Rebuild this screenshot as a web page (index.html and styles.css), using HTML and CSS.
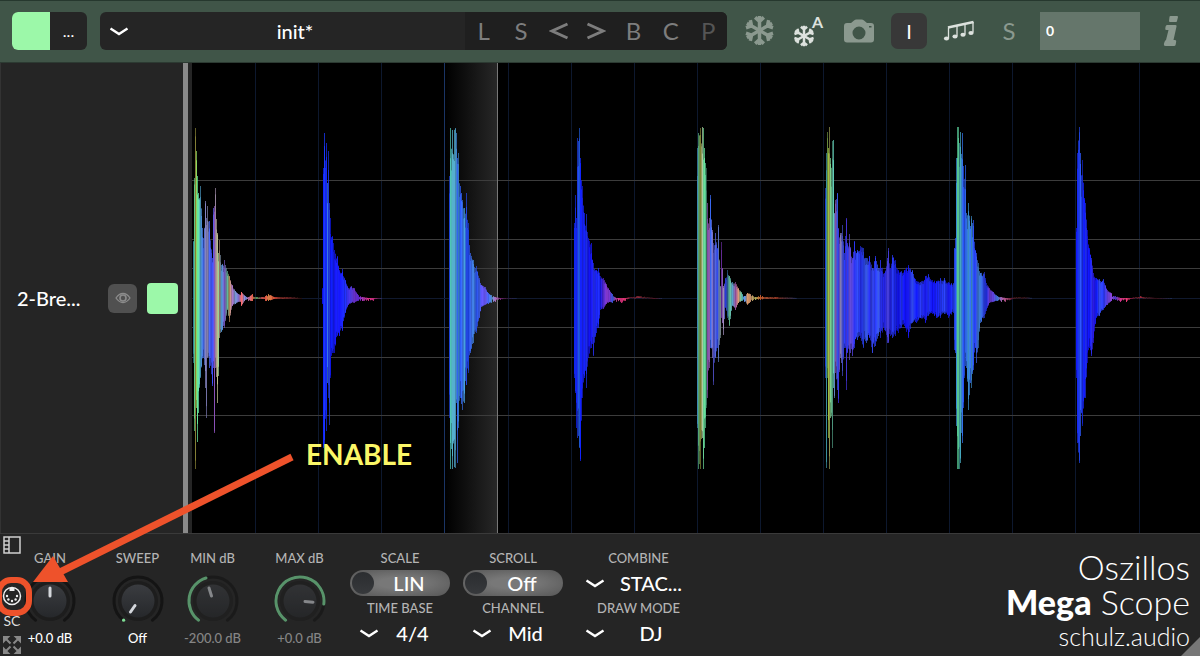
FILE: index.html
```html
<!DOCTYPE html>
<html lang="en">

<head>
  <meta charset="utf-8">
  <title>Oszillos Mega Scope</title>
  <link rel="stylesheet" href="styles.css">
</head>

<body>
  <!-- shared shapes -->
  <svg class="defs" width="0" height="0" aria-hidden="true">
    <defs>
      <linearGradient id="knobFill" x1="0" y1="0" x2="0" y2="1">
        <stop offset="0" stop-color="#3a3c40" />
        <stop offset="1" stop-color="#26282b" />
      </linearGradient>
      <linearGradient id="scanFill" x1="0" y1="0" x2="1" y2="0">
        <stop offset="0" stop-color="#000" />
        <stop offset="1" stop-color="#282828" />
      </linearGradient>
      <g id="arm">
        <path d="M0 0V-15M-4.500 -13.500L0 -9.500L4.500 -13.500" />
      </g>
      <symbol id="flake" viewBox="-16 -16 32 32">
        <g fill="none" stroke="currentColor" stroke-width="3.600">
          <use href="#arm" />
          <use href="#arm" transform="rotate(60)" />
          <use href="#arm" transform="rotate(120)" />
          <use href="#arm" transform="rotate(180)" />
          <use href="#arm" transform="rotate(240)" />
          <use href="#arm" transform="rotate(300)" />
        </g>
      </symbol>
      <symbol id="chevron" viewBox="0 0 20 10">
        <path d="M1.500 1.500L10 7L18.500 1.500" fill="none" stroke="#fff" stroke-width="2.400" />
      </symbol>
      <symbol id="track" viewBox="-27 -27 54 54">
        <circle r="20" fill="#1d1d1d" />
        <path d="M-14.400 19.200A24 24 0 1 1 14.400 19.200" fill="none" stroke="#141414" stroke-width="3" stroke-linecap="round" />
        <circle r="16.500" fill="url(#knobFill)" />
      </symbol>
    </defs>
  </svg>

  <header class="topbar">
    <div class="color-box">
      <button class="swatch" aria-label="Color"></button>
      <button class="more">...</button>
    </div>

    <div class="preset">
      <div class="picker preset-picker">
        <svg class="chevron"><use href="#chevron" /></svg>
        <select aria-label="Preset">
          <option>init*</option>
        </select>
      </div>
      <div class="preset-buttons">
        <button>L</button>
        <button>S</button>
        <button aria-label="Previous"><svg width="20" height="18" viewBox="0 0 20 18"><path d="M18.500 2L3 9L18.500 16" /></svg></button>
        <button aria-label="Next"><svg width="20" height="18" viewBox="0 0 20 18"><path d="M1.500 2L17 9L1.500 16" /></svg></button>
        <button>B</button>
        <button>C</button>
        <button class="off">P</button>
      </div>
    </div>

    <div class="tools">
      <button aria-label="Freeze"><svg width="31" height="31"><use href="#flake" /></svg></button>
      <button class="lit" aria-label="Auto freeze">
        <svg width="40" height="36" viewBox="0 0 40 36">
          <use href="#flake" x="4" y="12" width="22" height="22" />
          <text x="23" y="15" font-size="16" font-weight="700" fill="currentColor">A</text>
        </svg>
      </button>
      <button aria-label="Snapshot">
        <svg width="30" height="24" viewBox="0 0 30 24">
          <path fill="currentColor" fill-rule="evenodd" d="M3 4H7L10 1.500Q11 .500 12.500 .500H17.500Q19 .500 20 1.500L23 4H27Q30 4 30 7V20.500Q30 23.500 27 23.500H3Q0 23.500 0 20.500V7Q0 4 3 4ZM15 7.500A6.500 6.500 0 1 0 15 20.500A6.500 6.500 0 1 0 15 7.500ZM25 7V8.500H27.500V7Z" />
        </svg>
      </button>
      <button class="input-mode">I</button>
      <button class="lit" aria-label="Notes">
        <svg width="32" height="22" viewBox="0 0 32 22">
          <g fill="none" stroke="currentColor" stroke-width="1.300">
            <path d="M5.500 18V7.500M14 16V6M22 14.500V4M30 12.500V2" />
            <path d="M5 7.500L30.500 2" stroke-width="2.800" />
          </g>
          <g fill="currentColor">
            <ellipse cx="3.500" cy="18.500" rx="2.600" ry="2" />
            <ellipse cx="12" cy="16.500" rx="2.600" ry="2" />
            <ellipse cx="20" cy="14.800" rx="2.600" ry="2" />
            <ellipse cx="28" cy="13" rx="2.600" ry="2" />
          </g>
        </svg>
      </button>
      <button>S</button>
    </div>

    <input class="number" type="text" value="0" aria-label="Value">

    <button class="info" aria-label="Info">
      <svg width="16" height="32" viewBox="0 0 16 32">
        <path fill="currentColor" d="M7.500 1H14Q15 1 15 2L14 6Q14 7 13 7H7Q6 7 6 6L6.500 2Q6.500 1 7.500 1ZM4 10H12.500Q14 10 13.500 11.500L10.500 25H12Q13.500 25 13.200 26.500L12.700 29.500Q12.400 31 11 31H2.500Q.500 31 1 28.500L1.500 27Q2 25.500 3 25L5.500 15H3.500Q2 15 2.300 13.500L2.600 11.500Q3 10 4 10Z" />
      </svg>
    </button>
  </header>

  <main class="middle">
    <aside class="tracks">
      <div class="track">
        <span class="track-name">2-Bre...</span>
        <button class="eye" aria-label="Show track">
          <svg width="16" height="12" viewBox="0 0 16 12">
            <path d="M1 6Q4 1.500 8 1.500T15 6Q12 10.500 8 10.500T1 6Z" fill="none" stroke="#8c8c8c" stroke-width="1.300" />
            <circle cx="8" cy="6" r="3" fill="none" stroke="#8c8c8c" stroke-width="1.600" />
          </svg>
        </button>
        <button class="track-color" aria-label="Track color"></button>
      </div>
    </aside>
    <div class="splitter"></div>
    <svg class="scope" id="scope" viewBox="0 0 1008 470" preserveAspectRatio="none" role="img" aria-label="Waveform"></svg>
  </main>

  <footer class="controls">
    <div class="side">
      <button aria-label="Toggle side panel">
        <svg width="18" height="18" viewBox="0 0 18 18" fill="none" stroke="#d0d0d0" stroke-width="1.500">
          <path d="M1 1H17V17H1ZM6 1V17M1 5H6M1 9H6M1 13H6" />
        </svg>
      </button>
      <button class="sidechain">
        <svg width="20" height="20" viewBox="-10 -10 20 20">
          <circle r="8.500" fill="none" stroke="#eee" stroke-width="1.500" />
          <g fill="#eee">
            <rect x="-2.500" y="-8" width="5" height="3" />
            <circle cx="-5" cy="0" r="1.200" />
            <circle cx="5" cy="0" r="1.200" />
            <circle cx="-3.600" cy="3.500" r="1.200" />
            <circle cx="3.600" cy="3.500" r="1.200" />
            <circle cx="0" cy="5" r="1.200" />
          </g>
        </svg>
        SC
      </button>
      <button class="expand" aria-label="Full size">
        <svg width="18" height="18" viewBox="0 0 18 18">
          <g fill="#888" stroke="#888" stroke-width="2">
            <path d="M1 5V1H5ZM3 3L7.500 7.500M13 1H17V5ZM15 3L10.500 7.500M1 13V17H5ZM3 15L7.500 10.500M17 13V17H13ZM15 15L10.500 10.500" />
          </g>
        </svg>
      </button>
    </div>

    <div class="knobs levels">
      <div class="knob gain">
        <span class="label">GAIN</span>
        <svg viewBox="-27 -27 54 54">
          <use href="#track" x="-27" y="-27" width="54" height="54" />
          <path class="pointer" d="M0 -5V-13" />
        </svg>
        <span class="value">+0.0 dB</span>
      </div>
      <div class="knob">
        <span class="label">SWEEP</span>
        <svg viewBox="-27 -27 54 54">
          <use href="#track" x="-27" y="-27" width="54" height="54" />
          <circle cx="-14.400" cy="19.200" r="1.600" fill="#7fdc95" />
          <path class="pointer" d="M-3 4.500L-7.500 11" />
        </svg>
        <span class="value">Off</span>
      </div>
    </div>

    <div class="knobs range">
      <div class="knob dim">
        <span class="label">MIN dB</span>
        <svg viewBox="-27 -27 54 54">
          <use href="#track" x="-27" y="-27" width="54" height="54" opacity=".6" />
          <path class="arc" d="M-14.400 19.200A24 24 0 0 1 -7 -23" />
          <path class="pointer" d="M-1.500 -5L-4 -13" />
        </svg>
        <span class="value">-200.0 dB</span>
      </div>
      <div class="knob dim">
        <span class="label">MAX dB</span>
        <svg viewBox="-27 -27 54 54">
          <use href="#track" x="-27" y="-27" width="54" height="54" opacity=".6" />
          <path class="arc" d="M-14.400 19.200A24 24 0 1 1 23.800 3" />
          <path class="pointer" d="M5 .500L13 1.200" />
        </svg>
        <span class="value">+0.0 dB</span>
      </div>
    </div>

    <div class="options">
      <div class="option">
        <span class="label">SCALE</span>
        <button class="switch" role="switch" aria-checked="false">LIN</button>
        <label class="label" for="timebase">TIME BASE</label>
        <div class="picker">
          <svg class="chevron"><use href="#chevron" /></svg>
          <select id="timebase">
            <option>4/4</option>
          </select>
        </div>
      </div>
      <div class="option">
        <span class="label">SCROLL</span>
        <button class="switch" role="switch" aria-checked="false">Off</button>
        <label class="label" for="channel">CHANNEL</label>
        <div class="picker">
          <svg class="chevron"><use href="#chevron" /></svg>
          <select id="channel">
            <option>Mid</option>
          </select>
        </div>
      </div>
      <div class="option wide">
        <label class="label" for="combine">COMBINE</label>
        <div class="picker">
          <svg class="chevron"><use href="#chevron" /></svg>
          <select id="combine">
            <option>STAC...</option>
          </select>
        </div>
        <label class="label" for="drawmode">DRAW MODE</label>
        <div class="picker">
          <svg class="chevron"><use href="#chevron" /></svg>
          <select id="drawmode">
            <option>DJ</option>
          </select>
        </div>
      </div>
    </div>

    <div class="brand">
      <div>Oszillos</div>
      <div><b>Mega</b> Scope</div>
      <a href="#">schulz.audio</a>
    </div>
    <div class="resize"></div>

    <!-- hint pointing at the sidechain button -->
    <div class="hint">
      <svg width="300" height="206" viewBox="0 0 300 206">
        <path d="M292 7L56 124" stroke="#ee522b" stroke-width="7" />
        <path d="M33 132L53 106L68 132Z" fill="#ee522b" />
        <rect x="-1" y="130" width="30" height="33" rx="12" fill="none" stroke="#ee522b" stroke-width="6" />
      </svg>
      <span>ENABLE</span>
    </div>
  </footer>

  <script src="scope.js"></script>
</body>

</html>
```
FILE: styles.css
```css
* {
  box-sizing: border-box;
}

body {
  margin: 0;
  height: 100vh;
  display: flex;
  flex-direction: column;
  overflow: hidden;
  background: #252525;
  color: #fff;
  font-family: Lato, "Liberation Sans", sans-serif;
}

button,
select,
input {
  font-family: inherit;
  color: inherit;
  border: none;
  padding: 0;
  margin: 0;
  background: none;
}

button {
  cursor: pointer;
}

.defs {
  position: absolute;
}

/* top bar */
.topbar {
  display: flex;
  align-items: center;
  height: 63px;
  flex-shrink: 0;
  padding: 0 4px 2px 12px;
  background: #405548;
  border-top: 1px solid #26382e;
  border-bottom: 1px solid #2c3a32;
}

.color-box {
  display: flex;
  width: 75px;
  height: 38px;
  margin-right: 13px;
  border-radius: 6px;
  overflow: hidden;
  background: #252525;
}

.swatch {
  width: 38px;
  background: #9cf8a9;
}

.more {
  flex: 1;
  font-size: 16px;
}

.preset {
  flex: 1;
  display: flex;
  height: 38px;
  border-radius: 6px;
  overflow: hidden;
  background: #252525;
}

.preset-buttons {
  display: flex;
  width: 262px;
  background: #1f1f1f;
}

.preset-buttons button {
  flex: 1;
  font-size: 24px;
  color: #7d7d7d;
}

.preset-buttons svg {
  display: block;
  margin: 0 auto;
  fill: none;
  stroke: #7d7d7d;
  stroke-width: 3;
}

.preset-buttons .off {
  color: #555;
}

/* drop-downs */
.picker {
  position: relative;
  height: 26px;
}

.picker select {
  width: 100%;
  height: 100%;
  padding-left: 25px;
  appearance: none;
  font-size: 20px;
  font-weight: 500;
  text-align: center;
  text-align-last: center;
}

.chevron {
  position: absolute;
  left: 9px;
  top: 50%;
  width: 20px;
  height: 10px;
  margin-top: -4px;
  pointer-events: none;
}

.preset-picker {
  flex: 1;
  height: 38px;
}

.tools {
  display: flex;
  align-items: center;
  margin: 0 6px 0 7px;
}

.tools button {
  display: flex;
  align-items: center;
  justify-content: center;
  width: 50px;
  height: 38px;
  font-size: 24px;
  color: #8b998f;
}

.tools .lit {
  color: #dde2de;
}

.tools .input-mode {
  width: 36px;
  height: 36px;
  margin: 0 7px;
  border-radius: 7px;
  font-size: 20px;
  color: #fff;
  background: #383838;
}

.number {
  width: 100px;
  height: 38px;
  padding-left: 6px;
  font-size: 14px;
  font-weight: 700;
  background: #65766b;
}

.info {
  width: 50px;
  margin-left: 6px;
  color: #8b998f;
}

.info svg {
  display: block;
  margin: 0 auto;
}

/* tracks and scope */
.middle {
  flex: 1;
  display: flex;
  min-height: 0;
}

.tracks {
  display: flex;
  flex-direction: column;
  justify-content: center;
  width: 183px;
  border-left: 1px solid #333;
}

.track {
  display: flex;
  align-items: center;
  padding: 0 5px 0 16px;
}

.track-name {
  flex: 1;
  font-size: 20px;
  font-weight: 500;
}

.eye {
  display: flex;
  align-items: center;
  justify-content: center;
  width: 29px;
  height: 29px;
  margin-right: 10px;
  border-radius: 6px;
  background: #505050;
}

.track-color {
  width: 31px;
  height: 31px;
  border-radius: 4px;
  background: #9cf8a9;
}

.splitter {
  width: 5px;
  margin-right: 4px;
  background: #8a8a8a;
}

.scope {
  flex: 1;
  min-width: 0;
  height: 100%;
  background: #000;
}

/* bottom controls */
.controls {
  position: relative;
  display: flex;
  height: 123px;
  flex-shrink: 0;
  border-top: 1px solid #3a3a3a;
}

.side {
  display: flex;
  flex-direction: column;
  align-items: center;
  width: 25px;
  padding: 2px 1px 0 0;
}

.side svg {
  display: block;
  margin: 0 auto;
}

.sidechain {
  margin-top: 32px;
  font-size: 14px;
  line-height: 18px;
  color: #ddd;
}

.sidechain svg {
  margin-bottom: 6px;
}

.side .expand {
  margin-top: 6px;
}

.knobs,
.options {
  display: flex;
  padding-top: 15px;
}

.levels {
  gap: 25px;
}

.range {
  gap: 12px;
}

.knob {
  display: flex;
  flex-direction: column;
  align-items: center;
  width: 75px;
  white-space: nowrap;
}

.gain {
  width: 50px;
}

.knob svg {
  width: 54px;
  height: 54px;
  margin-top: 7px;
}

.label {
  font-size: 13px;
  font-weight: 500;
  line-height: 18px;
  color: #b4b4b4;
}

.value {
  font-size: 13px;
  font-weight: 500;
  line-height: 20px;
}

.dim .value {
  color: #868686;
}

.pointer {
  stroke: #d4d7dc;
  stroke-width: 3;
  stroke-linecap: round;
}

.dim .pointer {
  stroke: #85878a;
}

.arc {
  fill: none;
  stroke: #58936a;
  stroke-width: 3;
  stroke-linecap: round;
}

.options {
  gap: 13px;
  margin-left: 13px;
}

.option {
  display: flex;
  flex-direction: column;
  width: 100px;
  text-align: center;
}

.wide {
  width: 125px;
}

.switch {
  position: relative;
  height: 26px;
  padding-left: 18px;
  border-radius: 13px;
  font-size: 20px;
  font-weight: 500;
  line-height: 26px;
  background: radial-gradient(ellipse, #787878 30%, #565656);
}

.switch::before {
  content: "";
  position: absolute;
  left: 2px;
  top: 2px;
  width: 22px;
  height: 22px;
  border-radius: 50%;
  background: linear-gradient(#2b2d30, #37393c);
}

.option .switch,
.option .picker {
  margin: 3px 0;
}

.brand {
  flex: 1;
  padding: 15px 10px 0 0;
  text-align: right;
  font-size: 34px;
  font-weight: 300;
  line-height: 35px;
}

.brand b {
  font-weight: 900;
}

.brand a {
  display: block;
  font-size: 25px;
  color: inherit;
  text-decoration: none;
}

.resize {
  position: absolute;
  right: 0;
  bottom: 0;
  width: 19px;
  height: 19px;
  background: #777;
  clip-path: polygon(100% 0, 100% 100%, 0 100%);
}

.hint {
  position: absolute;
  left: 0;
  bottom: 0;
  display: flex;
  align-items: flex-start;
  gap: 6px;
  pointer-events: none;
  color: #fbf767;
  font-size: 28px;
  font-weight: 700;
  line-height: 8px;
}
```
FILE: scope.js
```js
const svg = document.getElementById("scope");
const NS = "http://www.w3.org/2000/svg";
const W = 1008;
const H = 470;
const MID = 235;

// each point: x, height above the middle, height below the middle, color
const hits = [
  [[1, 57, 65, "#3a8fb0"], [2, 120, 133, "#63d58a"], [3, 170, 171, "#8a8438"], [4, 147, 110, "#8ad860"], [5, 122, 144, "#5fd68f"],
   [6, 105, 115, "#62d9a0"], [8, 112, 80, "#4a98c0"], [11, 60, 60, "#3f62e0"], [13, 97, 90, "#7d7cb8"], [14, 80, 120, "#7a78b0"],
   [15, 92, 60, "#8580a8"], [17, 77, 70, "#4560e8"], [20, 40, 88, "#3a4be8"], [21, 90, 70, "#5a5ae0"], [22, 92, 135, "#8a50b8"],
   [23, 110, 70, "#9a86a0"], [25, 65, 105, "#b0b080"], [26, 45, 78, "#90c08a"], [27, 58, 40, "#a08070"], [29, 33, 34, "#4a90c8"],
   [32, 38, 30, "#7a58c8"], [35, 27, 12, "#58a888"], [37, 22, 24, "#c09060"], [40, 13, 8, "#a070c0"], [43, 7, 6, "#6a8ac0"],
   [46, 4, 4, "#8070d0"], [49, 6, 8, "#e06060"], [53, 2, 2, "#6a8ae0"], [56, 1, 3, "#c070a0"], [60, 4, 3, "#e06048"], [64, 1, 1, "#50a060"],
   [69, 1, 1, "#c05050"], [73, 2, 3, "#d05040"], [76, 4, 3, "#d08048"], [82, 1, 1, "#c04030"], [98, 1, 1, "#602020"], [110, 0, 0, "#201010"]],

  [[130, 10, 6, "#1010d0"], [131, 130, 150, "#1020ff"], [132, 165, 148, "#1a35f0"], [134, 155, 133, "#1428ff"], [135, 115, 85, "#3a78e0"],
   [136, 147, 100, "#2038f0"], [137, 95, 127, "#2845d8"], [138, 80, 80, "#1018ff"], [140, 62, 55, "#1020f0"], [142, 48, 55, "#1515e8"],
   [145, 42, 38, "#1820ff"], [147, 28, 38, "#1515f0"], [150, 29, 33, "#1a25ff"], [153, 18, 15, "#2030f0"], [156, 10, 7, "#4030e8"],
   [159, 12, 5, "#5038d0"], [162, 10, 5, "#6a30c8"], [166, 3, 3, "#6028d0"], [170, 1, 3, "#9a30a8"], [176, 0, 3, "#d03080"],
   [181, 0, 3, "#b02870"], [186, 0, 1, "#502050"], [190, 0, 0, "#182a50"]],

  [[257, 122, 120, "#2048f0"], [258, 170, 171, "#48b8a8"], [260, 168, 171, "#50a8c0"], [263, 170, 170, "#50a0c8"], [264, 165, 105, "#4088e0"],
   [265, 140, 165, "#3060e0"], [266, 145, 130, "#3a88d0"], [268, 112, 100, "#2c58f0"], [270, 98, 112, "#3a70e8"], [272, 90, 105, "#4090c8"],
   [274, 105, 87, "#2040d0"], [276, 75, 75, "#2048f0"], [278, 45, 55, "#3a68f0"], [281, 38, 45, "#4080d8"], [284, 32, 35, "#2a50e8"],
   [287, 20, 20, "#3858d8"], [289, 13, 9, "#5a50f0"], [293, 11, 7, "#6050e0"], [296, 5, 6, "#4060e8"], [299, 3, 5, "#5090d0"],
   [303, 1, 4, "#b070c0"], [308, 0, 2, "#702870"], [314, 0, 1, "#301838"], [325, 0, 0, "#182a50"]],

  [[382, 75, 80, "#1020e0"], [383, 103, 95, "#1428d0"], [384, 80, 130, "#1020ff"], [385, 160, 140, "#2040f0"], [387, 170, 150, "#2060e8"],
   [388, 140, 163, "#1020ff"], [390, 112, 100, "#1820d8"], [392, 85, 80, "#1420ff"], [394, 84, 90, "#2030f0"], [396, 60, 60, "#1010e0"],
   [399, 55, 50, "#1818f0"], [401, 35, 58, "#2028d0"], [404, 28, 35, "#1820f0"], [406, 30, 30, "#2030ff"], [408, 22, 12, "#1818d8"],
   [411, 20, 11, "#5028c8"], [414, 14, 6, "#8038c8"], [417, 8, 4, "#7030c0"], [420, 4, 5, "#3858e0"], [424, 0, 4, "#c03890"],
   [429, 0, 5, "#d83078"], [433, 0, 3, "#c03060"], [438, 1, 0, "#501828"], [445, 2, 0, "#882838"], [455, 1, 0, "#401820"],
   [462, 0, 1, "#501828"], [470, 0, 0, "#182a50"]],

  [[505, 150, 130, "#3878a0"], [506, 165, 171, "#50a070"], [508, 170, 171, "#7a7c30"], [510, 171, 140, "#a0b890"], [511, 170, 171, "#60c088"],
   [512, 150, 150, "#60d090"], [513, 135, 130, "#64d89c"], [514, 130, 110, "#408068"], [515, 95, 100, "#8048a0"], [517, 80, 70, "#9060b0"],
   [518, 103, 50, "#3868f0"], [520, 68, 60, "#7870c0"], [521, 55, 87, "#4040a0"], [523, 65, 60, "#5060d8"], [525, 50, 50, "#3048e8"],
   [526, 73, 64, "#5870b8"], [528, 12, 40, "#7a8c90"], [529, 56, 20, "#602890"], [531, 12, 37, "#9080a8"], [533, 20, 10, "#3040f0"],
   [535, 28, 20, "#306098"], [537, 22, 28, "#68c898"], [540, 16, 8, "#5090b8"], [543, 16, 12, "#9850a0"], [546, 10, 5, "#d09070"],
   [549, 6, 3, "#60c0a0"], [552, 2, 4, "#5088e0"], [555, 5, 7, "#d09060"], [558, 4, 4, "#b08060"], [563, 1, 2, "#a0a050"],
   [568, 3, 2, "#d06030"], [574, 1, 1, "#b05030"], [585, 1, 1, "#803020"], [605, 0, 0, "#182a50"]],

  [[633, 110, 80, "#2040d0"], [634, 145, 170, "#40a0b0"], [635, 166, 80, "#608038"], [636, 150, 140, "#a0c840"], [637, 171, 171, "#a0a058"],
   [638, 140, 120, "#78c888"], [640, 157, 150, "#4a9078"], [641, 158, 90, "#58b8a8"], [642, 85, 100, "#6080c0"], [643, 98, 75, "#8050a0"],
   [645, 105, 92, "#3050d8"], [646, 70, 105, "#4038e8"], [648, 65, 60, "#8078a8"], [650, 73, 78, "#4850d0"], [652, 45, 50, "#2838f0"],
   [653, 62, 50, "#3038e0"], [654, 80, 92, "#4030c8"], [655, 55, 55, "#2838f0"], [657, 64, 62, "#6048c8"], [660, 40, 58, "#5040d8"],
   [662, 57, 50, "#2830e0"], [665, 48, 42, "#3048e8"], [668, 52, 40, "#2028d8"], [671, 50, 50, "#2840e8"], [674, 40, 45, "#3858e0"],
   [677, 42, 40, "#2830f0"], [680, 30, 55, "#3040d8"], [683, 42, 48, "#2838f0"], [686, 30, 38, "#3858e0"], [688, 38, 40, "#2830e8"],
   [692, 25, 32, "#2020d8"], [695, 40, 45, "#4038c8"], [696, 50, 45, "#4038c8"], [698, 30, 38, "#2020e8"], [700, 43, 40, "#2838e8"],
   [703, 38, 38, "#1820e0"], [706, 28, 35, "#1010e8"], [709, 27, 30, "#2030e8"], [712, 28, 28, "#1010f0"],
   [716, 33, 40, "#1818e8"], [720, 28, 25, "#3048e8"], [724, 17, 25, "#1018f0"], [728, 16, 20, "#2838f0"], [733, 22, 25, "#1818e0"],
   [736, 24, 18, "#2030f0"], [740, 18, 16, "#1010e8"], [744, 17, 20, "#1820f0"], [748, 20, 20, "#2030e8"], [752, 20, 16, "#2840f0"],
   [756, 16, 20, "#1818f0"], [761, 15, 15, "#2038e8"], [762, 15, 15, "#2038e8"]],

  [[762, 50, 52, "#2040c0"], [763, 60, 55, "#2848e8"], [764, 140, 128, "#3888d0"], [765, 171, 171, "#50b888"], [766, 171, 171, "#60d8a0"],
   [767, 155, 171, "#40a0a0"], [768, 166, 165, "#48b0c8"], [770, 165, 145, "#3068d8"], [771, 132, 110, "#2850f0"], [773, 133, 68, "#2858d0"],
   [774, 85, 70, "#3070e8"], [776, 95, 112, "#3888c0"], [778, 72, 85, "#3068f0"], [779, 82, 90, "#3880b8"], [781, 78, 72, "#2848e0"],
   [783, 48, 50, "#2840ff"], [784, 45, 65, "#3858e0"], [786, 35, 50, "#3878c8"], [788, 25, 25, "#3870d0"], [792, 26, 20, "#2838e0"],
   [794, 15, 13, "#2030e0"], [797, 10, 5, "#6838c8"], [801, 6, 4, "#5a40d8"], [805, 2, 3, "#4078d8"], [809, 1, 4, "#a060b0"],
   [813, 0, 4, "#b05080"], [818, 0, 2, "#602038"], [824, 1, 0, "#401818"], [832, 1, 0, "#381418"], [840, 0, 0, "#182a50"]],

  [[884, 70, 80, "#1018e0"], [885, 145, 145, "#1828f0"], [887, 171, 165, "#2048f0"], [888, 145, 138, "#2850e8"], [890, 138, 128, "#1828e0"],
   [892, 100, 100, "#1018ff"], [893, 95, 100, "#2030e8"], [895, 68, 65, "#1010e8"], [897, 50, 50, "#1018ff"], [899, 40, 58, "#2828d8"],
   [901, 25, 45, "#2818e0"], [904, 20, 20, "#1018f0"], [907, 19, 18, "#3048e0"], [911, 19, 12, "#2838f0"], [915, 8, 7, "#5838c8"],
   [919, 5, 3, "#8040c8"], [923, 2, 2, "#5038d0"], [928, 0, 4, "#c03080"], [934, 0, 4, "#e03870"], [939, 0, 1, "#801c40"],
   [943, 1, 0, "#501820"], [948, 2, 0, "#982838"], [954, 1, 0, "#481820"], [965, 0, 1, "#301018"], [980, 0, 0, "#182a50"]]
];

function add(name, attrs) {
  const el = document.createElementNS(NS, name);
  for (const key in attrs) el.setAttribute(key, attrs[key]);
  svg.appendChild(el);
}

// fixed seed, so the ripple is the same on every load
let seed = 7;
function rnd() {
  seed = (seed * 16807) % 2147483647;
  return seed / 2147483647;
}

function rgb(hex) {
  return [1, 3, 5].map(i => parseInt(hex.slice(i, i + 2), 16));
}

function column(x, up, down, color, opacity) {
  add("rect", { x: x, y: MID - up, width: 1, height: Math.max(1, up + down), fill: color, opacity: opacity });
}

function drawGrid() {
  add("rect", { x: 254, y: 0, width: 52, height: H, fill: "url(#scanFill)" });
  for (let i = 1; i < 16; i++) {
    add("rect", { x: Math.round(i * 63.1), y: 0, width: 1, height: H, fill: i === 4 ? "#1a3464" : "#0d182e" });
  }
  [-118, -59, -30, 29, 59, 117].forEach(y => {
    add("rect", { x: 0, y: MID + y, width: W, height: 1, fill: "#3c3c3c" });
  });
  add("rect", { x: 0, y: MID, width: W, height: 1, fill: "#10192e" });
  add("rect", { x: 305, y: 0, width: 1, height: H, fill: "#777" });
}

function drawHit(points) {
  for (let i = 0; i < points.length - 1; i++) {
    const a = points[i];
    const b = points[i + 1];
    const ca = rgb(a[3]);
    const cb = rgb(b[3]);
    // the thin tail is darker and more broken than the body
    const thin = a[1] + a[2] < 10;
    for (let x = a[0]; x < b[0]; x++) {
      const t = (x - a[0]) / (b[0] - a[0]);
      const shade = 0.88 + rnd() * 0.24;
      const color = ca.map((c, n) => Math.min(255, Math.round((c + (cb[n] - c) * t) * shade)));
      const cut = t === 0 ? 1 : (thin ? 0.3 : 0.85) + rnd() * (thin ? 0.7 : 0.15);
      const up = (a[1] + (b[1] - a[1]) * t) * cut;
      const down = (a[2] + (b[2] - a[2]) * t) * cut;
      const fill = "rgb(" + color.join(",") + ")";
      column(x, up, down, fill, 0.75);
      column(x, up * (0.8 + rnd() * 0.2), down * (0.8 + rnd() * 0.2), fill, 1);
    }
  }
}

drawGrid();
hits.forEach(drawHit);
```
